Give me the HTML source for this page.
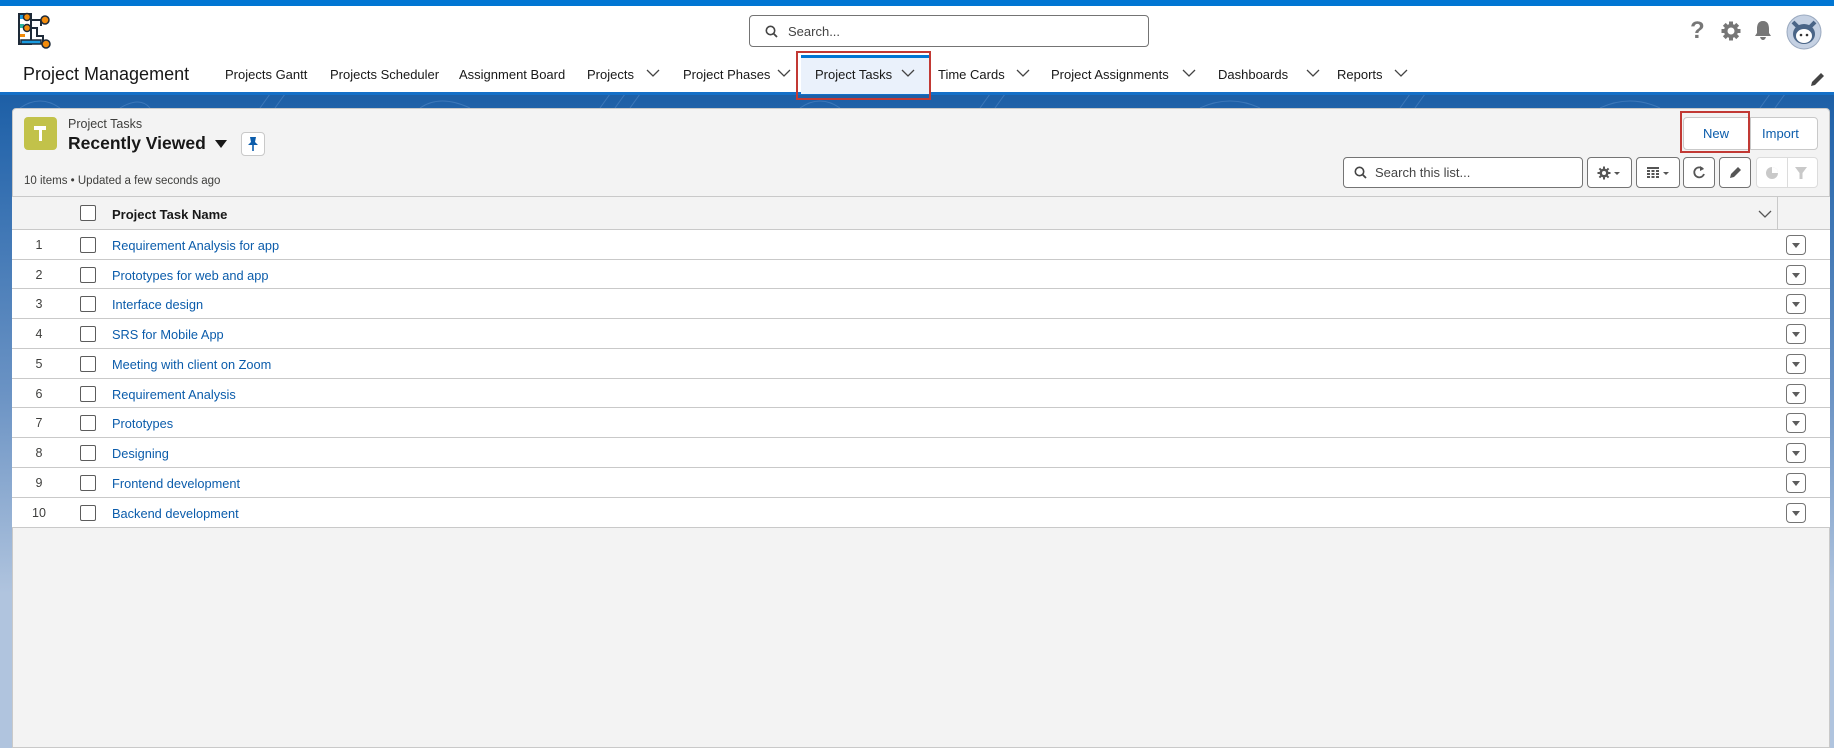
<!DOCTYPE html>
<html><head><meta charset="utf-8"><style>
*{box-sizing:border-box;margin:0;padding:0}
body{width:1834px;height:748px;overflow:hidden;font-family:"Liberation Sans",Arial,sans-serif;background:#b0c4de;position:relative;color:#181818}
.abs{position:absolute}
#top{left:0;top:0;width:1834px;height:6px;background:#0176d3}
#hdr{left:0;top:6px;width:1834px;height:88px;background:#fff}
#band{left:0;top:94px;width:1834px;height:654px;background:linear-gradient(#1d5fa6 0,#2c6aae 60px,#6b93c4 300px,#b0c4de 500px)}
#bandline{left:0;top:92px;width:1834px;height:3px;background:#1470c8}
.nav{top:67px;font-size:13px;color:#181818;white-space:nowrap}
#card{left:12px;top:108px;width:1818px;height:640px;background:#f3f3f3;border:1px solid #c9c9c9;border-radius:4px 4px 0 0}
.btn{background:#fff;border:1px solid #c9c9c9;border-radius:4px}
.row{left:12px;width:1818px;height:30px;background:#fff;border-bottom:1px solid #c9c9c9}
.row .n{position:absolute;left:0;width:54px;text-align:center;top:8px;font-size:12.5px;color:#3e3e3c}
.cb{position:absolute;left:68px;top:7px;width:16px;height:16px;border:1px solid #5c5c5c;border-radius:2px;background:#fff}
.row .t{position:absolute;left:100px;top:8px;font-size:12.8px;color:#0b5cab}
.dd{position:absolute;left:1774px;top:5px;width:20px;height:20px;border:1px solid #747474;border-radius:4px;background:#fff}
.dd:after{content:"";position:absolute;left:5px;top:7px;border-left:4px solid transparent;border-right:4px solid transparent;border-top:5px solid #5c5c5c}
</style></head><body>
<div id="band" class="abs"></div>
<svg class="abs" style="left:0;top:94px" width="1834" height="14"><g stroke="#4a82c0" stroke-width="1" fill="none" opacity=".7"><path d="M20 14 Q40 0 60 14 M120 14 Q140 2 150 14 M260 14 L270 0 M275 14 L285 0 M420 14 Q440 0 470 14 M600 14 L610 0 M615 14 L625 0 M630 14 L640 0 M800 14 Q820 0 840 14 M980 14 L990 0 M995 14 L1005 0 M1200 14 Q1230 0 1260 14 M1400 14 L1410 0 M1415 14 L1425 0 M1600 14 Q1630 0 1660 14 M1760 14 L1770 0 M1775 14 L1785 0"/></g></svg>
<div id="top" class="abs"></div>
<div id="hdr" class="abs"></div>
<div id="bandline" class="abs"></div>
<svg class="abs" style="left:17px;top:12px" width="36" height="38" viewBox="0 0 36 38">
<g stroke="#1e2a38" stroke-width="2" fill="none">
<rect x="2" y="2" width="12" height="30" fill="#fff"/>
<path d="M14 8 H24 M14 16 H20 V24 H26 V32 M24 8 V14"/>
</g>
<rect x="3" y="3" width="5" height="4" fill="#1a9be0"/><rect x="3" y="12" width="4" height="4" fill="#2cb5a0"/><rect x="3" y="22" width="5" height="3" fill="#f38b0b"/><rect x="4" y="28" width="20" height="4" fill="#1a9be0" stroke="#1e2a38" stroke-width="1.5"/>
<circle cx="10" cy="5" r="3.5" fill="#f38b0b" stroke="#1e2a38" stroke-width="1.5"/><circle cx="28" cy="8" r="4" fill="#f38b0b" stroke="#1e2a38" stroke-width="1.5"/><circle cx="10" cy="16" r="3.5" fill="#f38b0b" stroke="#1e2a38" stroke-width="1.5"/><circle cx="29" cy="32" r="4" fill="#f38b0b" stroke="#1e2a38" stroke-width="1.5"/>
</svg>
<div class="abs" style="left:749px;top:15px;width:400px;height:32px;border:1px solid #747474;border-radius:4px;background:#fff"></div>
<svg class="abs" style="left:765px;top:25px" width="13" height="13"><circle cx="5.5" cy="5.5" r="4.2" stroke="#444" stroke-width="1.6" fill="none"/><path d="M8.5 8.5 L12 12" stroke="#444" stroke-width="1.8"/></svg>
<div class="abs" style="left:788px;top:24px;font-size:13px;color:#444">Search...</div>
<div class="abs" style="left:1690px;top:17px;font-size:24px;color:#777;font-weight:bold">?</div>
<svg class="abs" style="left:1721px;top:21px" width="20" height="20" viewBox="0 0 20 20"><g fill="#777"><circle cx="10" cy="10" r="7"/><rect x="8" y="0.5" width="4" height="19"/><rect x="0.5" y="8" width="19" height="4"/><rect x="8" y="0.5" width="4" height="19" transform="rotate(45 10 10)"/><rect x="8" y="0.5" width="4" height="19" transform="rotate(-45 10 10)"/></g><circle cx="10" cy="10" r="3.5" fill="#fff"/></svg>
<svg class="abs" style="left:1752px;top:19px" width="22" height="22" viewBox="0 0 22 22"><path d="M11 2 C6 2 5 6 5 10 V14 L3 17 H19 L17 14 V10 C17 6 16 2 11 2Z" fill="#777"/><path d="M8 18 H14 Q13 21 11 21 Q9 21 8 18Z" fill="#777"/></svg>
<svg class="abs" style="left:1786px;top:14px" width="36" height="36" viewBox="0 0 36 36"><circle cx="18" cy="18" r="17" fill="#c5d1e3" stroke="#9aa9bf"/><path d="M7 8 L12 13 M29 8 L24 13" stroke="#4a6587" stroke-width="4"/><ellipse cx="18" cy="20" rx="11" ry="10" fill="#4a6587"/><ellipse cx="18" cy="22" rx="8" ry="7" fill="#fff"/><circle cx="15" cy="21" r="1.3" fill="#333"/><circle cx="21" cy="21" r="1.3" fill="#333"/></svg>
<div class="abs" style="left:23px;top:64px;font-size:18px;color:#181818">Project Management</div>
<div class="abs" style="left:801px;top:55px;width:129px;height:39px;background:#eaf1fb;border-top:3px solid #0176d3"></div>
<div class="abs" style="left:796px;top:51px;width:135px;height:49px;border:2px solid #c23934"></div>
<div class="abs nav" style="left:225px">Projects Gantt</div>
<div class="abs nav" style="left:330px">Projects Scheduler</div>
<div class="abs nav" style="left:459px">Assignment Board</div>
<div class="abs nav" style="left:587px">Projects</div>
<div class="abs nav" style="left:683px">Project Phases</div>
<div class="abs nav" style="left:815px">Project Tasks</div>
<div class="abs nav" style="left:938px">Time Cards</div>
<div class="abs nav" style="left:1051px">Project Assignments</div>
<div class="abs nav" style="left:1218px">Dashboards</div>
<div class="abs nav" style="left:1337px">Reports</div>
<svg class="abs" style="left:0;top:0" width="1834" height="94"><g stroke="#444" stroke-width="1.3" fill="none">
<path d="M647 70 l6 6 l6 -6 M778 70 l6 6 l6 -6 M902 70 l6 6 l6 -6 M1017 70 l6 6 l6 -6 M1183 70 l6 6 l6 -6 M1307 70 l6 6 l6 -6 M1395 70 l6 6 l6 -6"/></g>
<path d="M1812 82 l9 -9 l3 3 l-9 9 l-4 1z" fill="#444"/></svg>
<div id="card" class="abs"></div>
<div class="abs" style="left:24px;top:117px;width:33px;height:33px;background:#c2c24a;border-radius:4px"></div>
<svg class="abs" style="left:30px;top:123px" width="21" height="21" viewBox="0 0 21 21"><path d="M4 3 H16 V7 H12 V18 H9 V7 H4Z" fill="#fff"/></svg>
<div class="abs" style="left:68px;top:117px;font-size:12.5px;color:#3e3e3c">Project Tasks</div>
<div class="abs" style="left:68px;top:133px;font-size:17.5px;font-weight:bold">Recently Viewed</div>
<div class="abs" style="left:215px;top:140px;border-left:6px solid transparent;border-right:6px solid transparent;border-top:8px solid #181818"></div>
<div class="abs btn" style="left:241px;top:132px;width:24px;height:24px"></div>
<svg class="abs" style="left:247px;top:136px" width="12" height="16"><path d="M3 1 H9 L8 6 L11 9 H1 L4 6Z M5.2 9 H6.8 V15 H5.2Z" fill="#0b5cab"/></svg>
<div class="abs" style="left:24px;top:175px;font-size:11.5px;color:#3e3e3c">10 items • Updated a few seconds ago</div>
<div class="abs btn" style="left:1683px;top:117px;width:135px;height:33px"></div>
<div class="abs" style="left:1750px;top:117px;width:1px;height:33px;background:#c9c9c9"></div>
<div class="abs" style="left:1703px;top:126px;font-size:13px;color:#0b5cab">New</div>
<div class="abs" style="left:1762px;top:126px;font-size:13px;color:#0b5cab">Import</div>
<div class="abs" style="left:1680px;top:111px;width:70px;height:42px;border:2px solid #c23934"></div>
<div class="abs btn" style="left:1343px;top:157px;width:240px;height:31px;border-color:#747474"></div>
<svg class="abs" style="left:1354px;top:166px" width="13" height="13"><circle cx="5.5" cy="5.5" r="4.2" stroke="#444" stroke-width="1.6" fill="none"/><path d="M8.5 8.5 L12 12" stroke="#444" stroke-width="1.8"/></svg>
<div class="abs" style="left:1375px;top:165px;font-size:13px;color:#444">Search this list...</div>
<div class="abs btn" style="left:1587px;top:157px;width:45px;height:31px;border-color:#747474"></div>
<svg class="abs" style="left:1597px;top:166px" width="26" height="14"><g fill="#555"><circle cx="7" cy="7" r="4.5"/><rect x="6" y="0.5" width="2" height="13"/><rect x="0.5" y="6" width="13" height="2"/><rect x="6" y="0.5" width="2" height="13" transform="rotate(45 7 7)"/><rect x="6" y="0.5" width="2" height="13" transform="rotate(-45 7 7)"/></g><circle cx="7" cy="7" r="2" fill="#fff"/><path d="M17 6 h6 l-3 3z" fill="#555"/></svg>
<div class="abs btn" style="left:1636px;top:157px;width:44px;height:31px;border-color:#747474"></div>
<svg class="abs" style="left:1646px;top:166px" width="26" height="14"><g fill="#555"><rect x="1" y="1" width="12" height="2"/><rect x="1" y="4" width="3" height="2"/><rect x="5.5" y="4" width="3" height="2"/><rect x="10" y="4" width="3" height="2"/><rect x="1" y="7" width="3" height="2"/><rect x="5.5" y="7" width="3" height="2"/><rect x="10" y="7" width="3" height="2"/><rect x="1" y="10" width="3" height="2"/><rect x="5.5" y="10" width="3" height="2"/><rect x="10" y="10" width="3" height="2"/></g><path d="M17 6 h6 l-3 3z" fill="#555"/></svg>
<div class="abs btn" style="left:1683px;top:157px;width:32px;height:31px;border-color:#747474"></div>
<svg class="abs" style="left:1692px;top:165px" width="14" height="15"><path d="M11 4 A5 5 0 1 0 12 9" stroke="#555" stroke-width="1.8" fill="none"/><path d="M8 1 L12 4 L8 6z" fill="#555"/></svg>
<div class="abs btn" style="left:1719px;top:157px;width:32px;height:31px;border-color:#747474"></div>
<svg class="abs" style="left:1728px;top:165px" width="14" height="15"><path d="M2 13 l1 -4 l7 -7 l3 3 l-7 7z" fill="#555"/></svg>
<div class="abs btn" style="left:1756px;top:157px;width:62px;height:31px;border-color:#dcdcdc"></div>
<div class="abs" style="left:1787px;top:157px;width:1px;height:31px;background:#dcdcdc"></div>
<svg class="abs" style="left:1764px;top:165px" width="50" height="16"><circle cx="8" cy="8" r="6" fill="#c9c9c9"/><path d="M8 8 V2 A6 6 0 0 1 14 8z" fill="#fff"/><path d="M31 2 H43 L38.5 8 V14 L35.5 14 V8z" fill="#c9c9c9"/></svg>
<div class="abs" style="left:12px;top:196px;width:1818px;height:34px;background:#f3f3f3;border-top:1px solid #c9c9c9;border-bottom:1px solid #c9c9c9"></div>
<div class="abs cb" style="left:80px;top:205px"></div>
<div class="abs" style="left:112px;top:207px;font-size:13px;font-weight:bold">Project Task Name</div>
<svg class="abs" style="left:1758px;top:209px" width="14" height="10"><path d="M1 2 l6 6 l6 -6" stroke="#555" stroke-width="1.3" fill="none"/></svg>
<div class="abs" style="left:1777px;top:197px;width:1px;height:32px;background:#c9c9c9"></div>
<div class="abs row" style="top:230px;height:30px"><div class="n">1</div><div class="cb"></div><div class="t">Requirement Analysis for app</div><div class="dd"></div></div>
<div class="abs row" style="top:260px;height:29px"><div class="n">2</div><div class="cb"></div><div class="t">Prototypes for web and app</div><div class="dd"></div></div>
<div class="abs row" style="top:289px;height:30px"><div class="n">3</div><div class="cb"></div><div class="t">Interface design</div><div class="dd"></div></div>
<div class="abs row" style="top:319px;height:30px"><div class="n">4</div><div class="cb"></div><div class="t">SRS for Mobile App</div><div class="dd"></div></div>
<div class="abs row" style="top:349px;height:30px"><div class="n">5</div><div class="cb"></div><div class="t">Meeting with client on Zoom</div><div class="dd"></div></div>
<div class="abs row" style="top:379px;height:29px"><div class="n">6</div><div class="cb"></div><div class="t">Requirement Analysis</div><div class="dd"></div></div>
<div class="abs row" style="top:408px;height:30px"><div class="n">7</div><div class="cb"></div><div class="t">Prototypes</div><div class="dd"></div></div>
<div class="abs row" style="top:438px;height:30px"><div class="n">8</div><div class="cb"></div><div class="t">Designing</div><div class="dd"></div></div>
<div class="abs row" style="top:468px;height:30px"><div class="n">9</div><div class="cb"></div><div class="t">Frontend development</div><div class="dd"></div></div>
<div class="abs row" style="top:498px;height:30px"><div class="n">10</div><div class="cb"></div><div class="t">Backend development</div><div class="dd"></div></div>
</body></html>
